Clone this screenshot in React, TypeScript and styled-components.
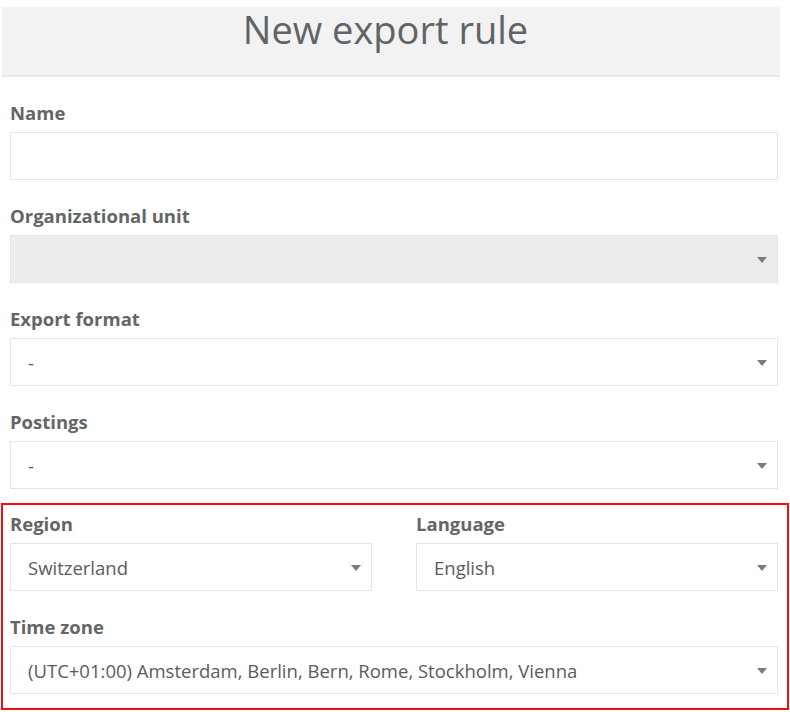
import styled, { createGlobalStyle } from 'styled-components';

const GlobalStyle = createGlobalStyle`
    html, body {
        margin: 0;
        padding: 0;
        background: #ffffff;
    }

    body {
        font-family: "Open Sans", "Liberation Sans", sans-serif;
    }

    * {
        box-sizing: border-box;
    }
`

const Page = styled.div`
    width: 790px;
    padding-top: 7px;
`

const Header = styled.div`
    margin: 0 10px 0 2px;
    padding: 0 11px 24px 0;
    background: #f2f2f2;
    border-bottom: 2px solid #e9e9e9;
    text-align: center;

    h1 {
        margin: 0;
        font-size: 38px;
        line-height: 44px;
        font-weight: 500;
        color: #5f6467;
    }
`

const Form = styled.div`
    padding: 24px 12px 0 10px;
`

const Field = styled.div<{ $last?: boolean }>`
    margin-bottom: ${p => (p.$last ? '14px' : '24px')};
`

const Label = styled.label`
    display: block;
    margin-bottom: 7px;
    font-size: 18.5px;
    line-height: 24px;
    font-weight: 700;
    color: #636669;
`

const Input = styled.div`
    height: 48px;
    border: 1px solid #e4e6e6;
    background: #ffffff;
`

const Select = styled.div<{ $disabled?: boolean }>`
    position: relative;
    display: flex;
    align-items: center;
    height: 48px;
    padding: 0 40px 0 17px;
    border: 1px solid #e4e6e6;
    background: ${p => (p.$disabled ? '#ececec' : '#ffffff')};
    font-size: 18.5px;
    color: #595c5e;
    white-space: nowrap;

    &::after {
        content: '';
        position: absolute;
        right: 10px;
        top: 21px;
        border-left: 5px solid transparent;
        border-right: 5px solid transparent;
        border-top: 6px solid #7b7b7b;
    }
`

const Highlight = styled.div`
    margin: 0 -11px 0 -9px;
    padding: 7px 9px 0 7px;
    border: 2px solid #ee1111;
`

const Row = styled.div`
    display: grid;
    grid-template-columns: 1fr 1fr;
    column-gap: 44px;
`

const App = () => {
    return (
        <>
            <GlobalStyle />
            <Page>
                <Header>
                    <h1>New export rule</h1>
                </Header>

                <Form>
                    <Field>
                        <Label>Name</Label>
                        <Input />
                    </Field>

                    <Field>
                        <Label>Organizational unit</Label>
                        <Select $disabled />
                    </Field>

                    <Field>
                        <Label>Export format</Label>
                        <Select>-</Select>
                    </Field>

                    <Field $last>
                        <Label>Postings</Label>
                        <Select>-</Select>
                    </Field>

                    <Highlight>
                        <Row>
                            <Field>
                                <Label>Region</Label>
                                <Select>Switzerland</Select>
                            </Field>

                            <Field>
                                <Label>Language</Label>
                                <Select>English</Select>
                            </Field>
                        </Row>

                        <Field $last>
                            <Label>Time zone</Label>
                            <Select>(UTC+01:00) Amsterdam, Berlin, Bern, Rome, Stockholm, Vienna</Select>
                        </Field>
                    </Highlight>
                </Form>
            </Page>
        </>
    )
}

export default App;
